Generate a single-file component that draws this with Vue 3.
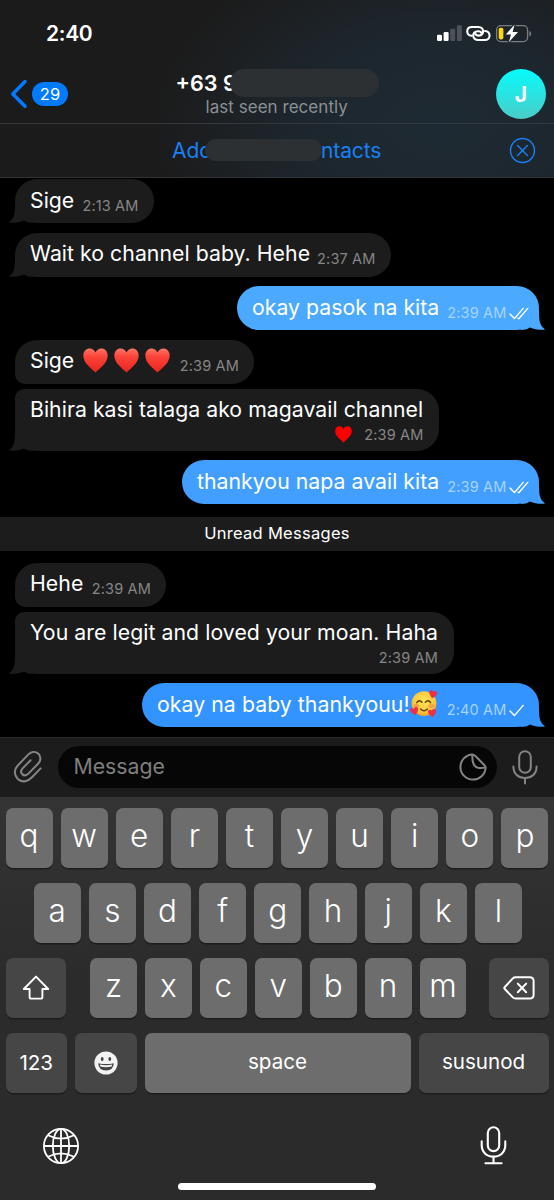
<script setup>
const messages = [
  { text: 'Sige', time: '2:13 AM', w: 138.5, top: 1, tail: true, ls: 0 },
  { text: 'Wait ko channel baby. Hehe', time: '2:37 AM', w: 375.5, top: 9.5, tail: true, ls: 0.04 },
  { text: 'okay pasok na kita', time: '2:39 AM', w: 302, top: 9.5, out: 'b1', tail: true, checks: 2, ls: 0.02 },
  { text: 'Sige', hearts: 3, time: '2:39 AM', w: 239, top: 9.5, join: 'first', ls: 0 },
  { text: 'Bihira kasi talaga ako magavail channel', time: '2:39 AM', w: 424, top: 5.5, tail: true, join: 'last', tall: true, small: true, ls: 0.03 },
  { text: 'thankyou napa avail kita', time: '2:39 AM', w: 357, top: 9.5, out: 'b2', tail: true, checks: 2, ls: 0.03 },
  { divider: 'Unread Messages' },
  { text: 'Hehe', time: '2:39 AM', w: 151, top: 12, join: 'first', ls: 0.05 },
  { text: 'You are legit and loved your moan. Haha', time: '2:39 AM', w: 438.5, top: 5.5, tail: true, join: 'last', tall: true, ls: 0.06 },
  { text: 'okay na baby thankyouu!', face: true, time: '2:40 AM', w: 397, top: 9.5, out: 'b3', tail: true, checks: 1, ls: 0.06 },
]
const row1 = 'qwertyuiop'.split('')
const row2 = 'asdfghjkl'.split('')
const row3 = 'zxcvbnm'.split('')
</script>

<template>
  <div class="phone">
    <svg class="defs" width="0" height="0">
      <defs>
        <linearGradient id="heartFill" x1="0" y1="0" x2="0" y2="1">
          <stop offset="0" stop-color="#ff7568" />
          <stop offset="0.35" stop-color="#fb4338" />
          <stop offset="1" stop-color="#e9251e" />
        </linearGradient>
        <radialGradient id="faceFill" cx="0.5" cy="0.4" r="0.62">
          <stop offset="0" stop-color="#ffe45c" />
          <stop offset="0.7" stop-color="#fdc93b" />
          <stop offset="1" stop-color="#ee9a28" />
        </radialGradient>
      </defs>
    </svg>

    <header class="header">
      <div class="status">
        <span class="clock">2:40</span>
        <svg class="status-icons" width="98" height="20" viewBox="436 24 98 20">
          <rect x="437" y="34.8" width="5" height="6.2" rx="1.2" fill="#fff" />
          <rect x="443.6" y="32" width="5" height="9" rx="1.2" fill="#fff" />
          <rect x="450.2" y="28.7" width="5" height="12.3" rx="1.2" fill="#4c5257" />
          <rect x="456.9" y="25.3" width="5" height="15.7" rx="1.2" fill="#4c5257" />
          <g fill="none" stroke="#fff" stroke-width="2.1" stroke-linecap="round">
            <path d="M471.6 35.8 C465.6 35 465.8 27 472 27 H478.4 C484.6 27 484.6 35.6 478.8 35.6 C476.4 35.6 475.4 34.6 475.2 33.4" />
            <path d="M485 31 C491.2 31.6 491 40 484.8 40 H478.4 C471.6 40 471.6 31.2 478 31.2 C480.2 31.2 481.4 32.2 481.6 33.4" />
          </g>
          <rect x="496.6" y="25.6" width="31" height="16" rx="4.4" fill="none" stroke="#7a7f83" stroke-width="1.3" />
          <path d="M529.4 31 C531.8 32 531.8 35.4 529.4 36.4 Z" fill="#7a7f83" />
          <rect x="498.7" y="27.8" width="4.7" height="11.6" rx="1.8" fill="#ffd60a" />
          <path d="M514.6 24.6 L505.8 34.6 H511 L508.8 42.2 L518 32 H512.6 Z" fill="#fff" stroke="#1d262d" stroke-width="2.6" paint-order="stroke" />
        </svg>
      </div>
      <div class="nav">
        <svg class="chevron" width="18" height="30" viewBox="0 0 18 30"><path d="M15 2.6 L2.8 15 L15 27.2" fill="none" stroke="#007aff" stroke-width="3.6" stroke-linecap="round" stroke-linejoin="round" /></svg>
        <span class="badge">29</span>
        <div class="peer">
          <div class="peer-name"><span class="num">+63 9</span><i class="mask name-mask"></i></div>
          <div class="seen">last seen recently</div>
        </div>
        <div class="avatar">J</div>
      </div>
      <div class="add">
        <span class="add-a">Add</span><i class="mask add-mask"></i><span class="add-b">ntacts</span>
        <svg class="close" width="27" height="27" viewBox="0 0 27 27"><g fill="none" stroke="#1a80f5" stroke-width="1.4" stroke-linecap="round"><circle cx="13.5" cy="13.5" r="12" /><path d="M8.6 8.6 L18.4 18.4 M18.4 8.6 L8.6 18.4" /></g></svg>
      </div>
    </header>

    <main class="chat">
      <template v-for="(m, i) in messages" :key="i">
        <div v-if="m.divider" class="divider">{{ m.divider }}</div>
        <div v-else class="bubble" :class="[m.out ? 'out ' + m.out : 'in', m.join, { tall: m.tall }]" :style="{ width: m.w + 'px', marginTop: m.top + 'px' }">
          <svg v-if="m.tail" class="tail" width="24" height="20" viewBox="-6 -20 24 20"><path d="M0 -20 C0 -9 -0.6 -4.6 -6 -0.8 C-5 0.2 3 0.3 9.2 -2.4 C12 -0.6 14.5 0 18 0 V-20 Z" /></svg>
          <span class="text" :style="{ letterSpacing: m.ls + 'px' }">{{ m.text }}</span>
          <span v-if="m.hearts" class="hearts">
            <svg v-for="h in m.hearts" :key="h" width="25" height="25" viewBox="0 0 25 25"><path d="M12.5 24.5 C9 21 0.3 15.5 0.3 7.6 C0.3 3.2 3.2 0.5 6.6 0.5 C9.4 0.5 11.6 2.2 12.5 4.6 C13.4 2.2 15.6 0.5 18.4 0.5 C21.8 0.5 24.7 3.2 24.7 7.6 C24.7 15.5 16 21 12.5 24.5 Z" fill="url(#heartFill)" /></svg>
          </span>
          <svg v-if="m.face" class="face" width="28" height="28" viewBox="0 0 28 28">
            <circle cx="14" cy="13.6" r="12.4" fill="url(#faceFill)" />
            <g fill="none" stroke="#6b3a12" stroke-width="1.5" stroke-linecap="round">
              <path d="M6.8 10.6 Q9.4 7.2 12 10.2 M15.4 10.2 Q18 7.2 20.6 10.6" transform="translate(0 2)" />
              <path d="M10.6 19 Q14 22.6 17.4 19" />
            </g>
            <g fill="#f77a4a" opacity="0.55"><ellipse cx="6.4" cy="16" rx="3" ry="2" /><ellipse cx="21.4" cy="16" rx="3" ry="2" /></g>
            <g fill="#ee2f45">
              <path transform="translate(19 0) rotate(12 4 4)" d="M4 8.4 C2.6 7 0 5 0 2.6 C0 0.2 3.2 -0.2 4 2 C4.8 -0.2 8 0.2 8 2.6 C8 5 5.4 7 4 8.4 Z" />
              <path transform="translate(0.4 17) rotate(-14 4 4)" d="M4 8.4 C2.6 7 0 5 0 2.6 C0 0.2 3.2 -0.2 4 2 C4.8 -0.2 8 0.2 8 2.6 C8 5 5.4 7 4 8.4 Z" />
              <path transform="translate(18.2 18.8) rotate(-8 4 4)" d="M4 8.4 C2.6 7 0 5 0 2.6 C0 0.2 3.2 -0.2 4 2 C4.8 -0.2 8 0.2 8 2.6 C8 5 5.4 7 4 8.4 Z" />
            </g>
          </svg>
          <span class="meta">
            <svg v-if="m.small" class="small-heart" width="17" height="17" viewBox="0 0 25 25"><path d="M12.5 24.5 C9 19.5 0.3 15.5 0.3 7.6 C0.3 3.2 3.2 0.5 6.6 0.5 C9.4 0.5 11.6 2.2 12.5 4.6 C13.4 2.2 15.6 0.5 18.4 0.5 C21.8 0.5 24.7 3.2 24.7 7.6 C24.7 15.5 16 19.5 12.5 24.5 Z" fill="#fe0000" /></svg>
            <span class="time">{{ m.time }}</span>
            <svg v-if="m.checks" class="checks" width="20" height="13" viewBox="0 0 20 13"><g fill="none" stroke="#fff" stroke-width="1.4" stroke-linecap="round" stroke-linejoin="round"><path d="M1 7 L5.4 11.6 L14.2 1.4" /><path v-if="m.checks === 2" d="M9 11.2 L9.8 11.8 L18.8 1.4" /></g></svg>
          </span>
        </div>
      </template>
    </main>

    <section class="composer">
      <svg class="clip" width="30" height="34" viewBox="0 0 30 34"><path d="M27.6 18.4 L19 27.2 C15.4 31 9.4 33.4 4.8 29 C0.4 24.6 1.2 19 5 15.2 L15.2 4.6 C18.2 1.6 22.4 1 25.4 3.8 C28.4 6.8 27.8 11 25 13.8 L15.4 23.6 C13.6 25.4 11.4 26 9.4 24.4 C7.6 22.6 7.8 20.4 9.6 18.4 L17.6 10.2" fill="none" stroke="#858585" stroke-width="2" stroke-linecap="round" /></svg>
      <div class="field">
        <span>Message</span>
        <svg width="28" height="28" viewBox="0 0 28 28"><g fill="none" stroke="#858585" stroke-width="2" stroke-linejoin="round"><path d="M13.4 1.4 A12.6 12.6 0 1 0 26.6 14.6 C26.4 13 25.6 12.4 24 10.8 L17.2 3.8 C15.8 2.2 15 1.5 13.4 1.4 Z" /><path d="M13.4 1.4 C13 8 13.6 13.4 19 14.8 C21.6 15.4 24 15 26.6 14.6" /></g></svg>
      </div>
      <svg class="mic" width="26" height="35" viewBox="0 0 26 35"><g fill="none" stroke="#858585" stroke-width="2" stroke-linecap="round"><rect x="7.2" y="1.2" width="11.6" height="21.6" rx="5.8" /><path d="M1.4 16.6 C1.4 24 6.4 28 13 28 S24.6 24 24.6 16.6 M13 28 V33.4" /></g></svg>
    </section>

    <section class="keyboard">
      <div class="krow"><b v-for="k in row1" :key="k" class="key">{{ k }}</b></div>
      <div class="krow second"><b v-for="k in row2" :key="k" class="key">{{ k }}</b></div>
      <div class="krow third">
        <b class="key dark side"><svg width="28" height="26" viewBox="0 0 28 26"><path d="M14 1.6 L26.2 14 H20.4 V22 Q20.4 23.6 18.8 23.6 H9.2 Q7.6 23.6 7.6 22 V14 H1.8 Z" fill="none" stroke="#fff" stroke-width="1.9" stroke-linejoin="round" /></svg></b>
        <div class="letters"><b v-for="k in row3" :key="k" class="key">{{ k }}</b></div>
        <b class="key dark side"><svg width="32" height="24" viewBox="0 0 32 24"><g fill="none" stroke="#fff" stroke-width="2" stroke-linecap="round" stroke-linejoin="round"><path d="M12.6 1.2 H26.6 Q30.6 1.2 30.6 5 V18.8 Q30.6 22.6 26.6 22.6 H12.6 Q11 22.6 9.8 21.4 L1.8 13 Q0.8 12 1.8 11 L9.8 2.4 Q11 1.2 12.6 1.2 Z" /><path d="M14.8 7.6 L23.2 16.2 M23.2 7.6 L14.8 16.2" /></g></svg></b>
      </div>
      <div class="krow fourth">
        <b class="key dark word num-key">123</b>
        <b class="key dark emoji-key"><svg width="24" height="24" viewBox="0 0 24 24"><circle cx="12" cy="12" r="11.6" fill="#f3f3f3" /><ellipse cx="8.2" cy="8" rx="1.4" ry="2" fill="#444" /><ellipse cx="15.8" cy="8" rx="1.4" ry="2" fill="#444" /><path d="M4.2 12.2 Q12 14 19.8 12.2 Q19.4 19.4 12 19.4 Q4.6 19.4 4.2 12.2 Z" fill="#444" /><path d="M5.8 13.6 Q12 15 18.2 13.6 L17.6 15.6 Q12 16.8 6.4 15.6 Z" fill="#f3f3f3" /></svg></b>
        <b class="key word space">space</b>
        <b class="key dark word next">susunod</b>
      </div>
      <div class="bottom">
        <svg width="38" height="38" viewBox="0 0 38 38"><g fill="none" stroke="#fff" stroke-width="1.8"><circle cx="19" cy="19" r="17.1" /><ellipse cx="19" cy="19" rx="8.2" ry="17.1" /><path d="M19 2 V36 M2 19 H36 M6 8.2 Q19 15 32 8.2 M6 29.8 Q19 23 32 29.8" /></g></svg>
        <svg width="27" height="39" viewBox="0 0 27 39"><g fill="none" stroke="#fff" stroke-width="2.1" stroke-linecap="round"><rect x="7.8" y="1.3" width="11.4" height="23.8" rx="5.7" /><path d="M1.7 15.4 V19 C1.7 26 6.4 30.6 13.5 30.6 S25.3 26 25.3 19 V15.4 M13.5 30.6 V37 M5.4 37.2 H21.6" /></g></svg>
      </div>
      <div class="home"></div>
    </section>
  </div>
</template>

<style>
html, body { margin: 0; background: #000; }
</style>

<style scoped>
.phone { width: 554px; height: 1200px; overflow: hidden; background: #000; color: #fff; font-family: Inter, "Noto Sans", sans-serif; display: flex; flex-direction: column; }
.phone * { box-sizing: border-box; }
svg { display: block; flex: none; }
.defs { position: absolute; }
.header { height: 178px; flex: none; border-bottom: 1px solid #303437; background: radial-gradient(ellipse 290px 190px at 440px 125px, #1e2a33 0%, #1d262d 50%, #1c1e20 85%, #1b1b1b 100%); }
.status { height: 66px; display: flex; justify-content: space-between; align-items: center; padding: 0 20px 0 46px; }
.clock { font-size: 21px; font-weight: 600; line-height: 26px; letter-spacing: -0.3px; margin-top: 1px; }
.status-icons { margin-top: 1px; }
.nav { height: 58px; display: flex; align-items: flex-start; border-bottom: 1px solid #34393d; padding-left: 10px; }
.chevron { margin-top: 13px; }
.badge { width: 36px; height: 24px; margin: 16px 0 0 4px; border-radius: 12px; background: #007aff; font-size: 16.5px; line-height: 24px; text-align: center; }
.peer { width: 204px; margin: 3px 0 0 107.5px; }
.peer-name { display: flex; height: 28px; }
.num { width: 54.5px; flex: none; white-space: nowrap; font-size: 21.6px; line-height: 28px; font-weight: 600; }
.mask { background: #2c3033; display: block; flex: none; position: relative; }
.name-mask { width: 149px; height: 28px; border-radius: 14px; }
.seen { font-size: 17px; line-height: 22px; margin: -1px 0 0 30px; color: #8c9093; white-space: nowrap; letter-spacing: 0.04px; }
.avatar { width: 50px; height: 50px; margin: 3px 0 0 116.5px; border-radius: 50%; background: linear-gradient(#06fbfc, #4bcdc8); font-size: 21px; font-weight: 700; line-height: 51px; text-align: center; flex: none; }
.add { height: 53px; display: flex; align-items: center; padding: 0 18px 0 172px; color: #1a80f5; font-size: 21px; line-height: 26px; }
.add-a { width: 33px; flex: none; white-space: nowrap; }
.add-mask { width: 117px; height: 22px; border-radius: 11px; margin-top: -2px; }
.add-b { margin-left: -1px; letter-spacing: -0.1px; }
.close { margin-left: auto; margin-top: -1px; }
.chat { height: 558.5px; flex: none; display: flex; flex-direction: column; }
.bubble { position: relative; height: 44px; flex: none; border-radius: 22px; padding: 0 15px; display: flex; }
.in { background: #1c1c1c; fill: #1c1c1c; margin-left: 15px; }
.out { align-self: flex-end; margin-right: 15px; }
.b1 { background: #4ba9ff; fill: #4ba9ff; }
.b2 { background: #429fff; fill: #429fff; }
.b3 { background: #3394ff; fill: #3394ff; }
.first { border-bottom-left-radius: 10px; }
.last { border-top-left-radius: 9px; }
.tall { height: 61.5px; }
.tail { position: absolute; bottom: 0; left: -6px; }
.out .tail { left: auto; right: -6px; transform: scaleX(-1); }
.text { position: relative; font-size: 21.25px; line-height: 26px; margin-top: 7.5px; white-space: nowrap; }
.tall .text { margin-top: 7px; }
.hearts { display: flex; gap: 6px; margin: 8.5px 0 0 9px; }
.face { margin: 7px 0 0 0; }
.meta { position: relative; display: flex; align-items: center; height: 18px; margin: 17px 0 0 auto; color: #868686; }
.tall .meta { position: absolute; right: 15.5px; bottom: 7.5px; margin: 0; }
.time { font-size: 14.5px; letter-spacing: 0.15px; white-space: nowrap; }
.out .meta { color: #a5d3ff; margin-right: -5px; }
.checks { margin-left: 2.5px; margin-top: 3px; }
.small-heart { margin-right: 12px; }
.divider { height: 33.5px; margin-top: 13px; flex: none; background: #1c1c1c; font-size: 16.5px; font-weight: 400; line-height: 33px; text-align: center; letter-spacing: 0.28px; }
.composer { height: 60.5px; flex: none; border-top: 1px solid #2c2c2c; background: #1c1c1c; display: flex; align-items: center; padding-left: 13px; }
.field { width: 439px; height: 42px; margin-left: 14.5px; border-radius: 21px; background: #060606; display: flex; align-items: center; justify-content: space-between; padding: 0 9.5px 0 16px; color: #7f7f7f; font-size: 21.25px; }
.field span { margin-top: -2px; }
.field svg { margin-top: -1px; }
.mic { margin-left: 15px; }
.keyboard { flex: 1; background: linear-gradient(#343434, #2b2b2b 45%, #2b2b2b); padding: 11px 5.5px 0; }
.krow { display: flex; gap: 8px; height: 60px; margin-bottom: 15px; }
.key { flex: 1 1 0; min-width: 0; height: 60px; border-radius: 7px; background: #6d6d6d; box-shadow: 0 1.5px 0 #1d1d1d; font-weight: 300; font-size: 31.5px; line-height: 56px; text-align: center; }
.dark { background: #464646; display: flex; align-items: center; justify-content: center; }
.second { padding: 0 26.5px 0 28px; }
.third { justify-content: flex-start; gap: 0; }
.side { flex: 0 0 60px; }
.side:last-child { margin-left: auto; }
.letters { width: 376.5px; margin-left: 24.5px; display: flex; gap: 8px; }
.fourth { gap: 8px; }
.word { font-size: 20.6px; font-weight: 400; line-height: 58px; }
.num-key, .emoji-key { flex: 0 0 61.5px; }
.space { flex: 0 0 266px; }
.next { padding-bottom: 2px; }
.bottom { display: flex; justify-content: space-between; padding: 0 47px 0 41.5px; height: 39px; margin: 33px -5.5px 0; align-items: center; }
.home { width: 198px; height: 7px; border-radius: 4px; background: #fff; margin: 17.5px auto 0; }
</style>
